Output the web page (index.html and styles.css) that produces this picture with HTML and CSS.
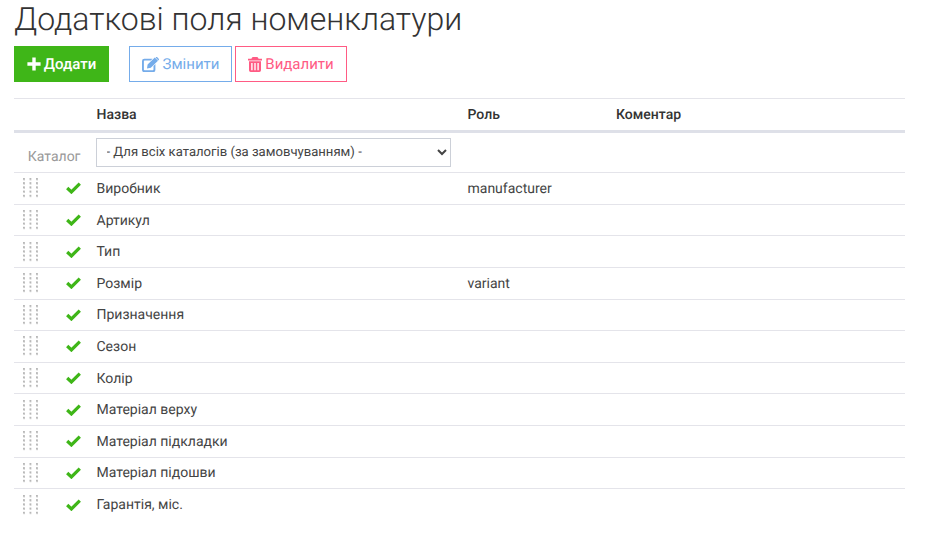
FILE: index.html
```html
<!DOCTYPE html>
<html lang="uk">
<head>
<meta charset="utf-8">
<title>Додаткові поля номенклатури</title>
<link rel="stylesheet" href="styles.css">
</head>
<body>
<h1 class="title">Додаткові поля номенклатури</h1>
<div class="toolbar">
  <button class="btn btn-add"><svg class="ico" viewBox="0 0 14 14"><path d="M5.3 0.4h3.4v4.9h4.9v3.4H8.7v4.9H5.3V8.7H0.4V5.3h4.9z" fill="currentColor"/></svg>Додати</button>
  <button class="btn btn-edit"><svg class="ico ico-edit" viewBox="0 0 17 15"><path d="M2.4 1.7h8.2L8.7 3.6H2.6a.7.7 0 0 0-.7.7v8.2c0 .4.3.7.7.7h8.2c.4 0 .7-.3.7-.7V8.9l1.9-1.9v5.8a2.4 2.4 0 0 1-2.4 2.4H2.4A2.4 2.4 0 0 1 0 12.8V4.1a2.4 2.4 0 0 1 2.4-2.4z" fill="currentColor"/><path d="M5.6 7.6l7.2-7.1 3.2 3.2-7.2 7.1-3.8.8zM13.9.3c.4-.4 1-.4 1.4 0l1.4 1.4c.4.4.4 1 0 1.4l-.3.3-2.8-2.8z" fill="currentColor"/></svg>Змінити</button>
  <button class="btn btn-del"><svg class="ico ico-del" viewBox="0 0 14 15"><path d="M5 0h4c.5 0 .9.3 1.1.7l.5 1.1H14v1.6H0V1.8h3.4L3.9.7C4.1.3 4.5 0 5 0zM1 4.3h12v9a1.7 1.7 0 0 1-1.7 1.7H2.7A1.7 1.7 0 0 1 1 13.3zm2.2 1.6v7.4h1.4V5.9zm3.1 0v7.4h1.4V5.9zm3.1 0v7.4h1.4V5.9z" fill="currentColor" fill-rule="evenodd"/></svg>Видалити</button>
</div>
<table class="grid">
  <colgroup><col class="c-drag"><col class="c-check"><col class="c-name"><col class="c-role"><col></colgroup>
  <thead>
    <tr><th></th><th></th><th>Назва</th><th>Роль</th><th>Коментар</th></tr>
  </thead>
  <tbody>
    <tr class="filter">
      <td colspan="2" class="filter-label">Каталог</td>
      <td class="filter-select"><select class="catalog"><option>- Для всіх каталогів (за замовчуванням) -</option></select></td>
      <td></td><td></td>
    </tr>
    <tr><td><span class="drag"></span></td><td class="ok"><svg class="check" viewBox="0 0 15 12"><path d="M1.2 6l4.2 4L13.8 1.6" fill="none" stroke="currentColor" stroke-width="3.2"/></svg></td><td>Виробник</td><td>manufacturer</td><td></td></tr>
    <tr><td><span class="drag"></span></td><td class="ok"><svg class="check" viewBox="0 0 15 12"><path d="M1.2 6l4.2 4L13.8 1.6" fill="none" stroke="currentColor" stroke-width="3.2"/></svg></td><td>Артикул</td><td></td><td></td></tr>
    <tr><td><span class="drag"></span></td><td class="ok"><svg class="check" viewBox="0 0 15 12"><path d="M1.2 6l4.2 4L13.8 1.6" fill="none" stroke="currentColor" stroke-width="3.2"/></svg></td><td>Тип</td><td></td><td></td></tr>
    <tr><td><span class="drag"></span></td><td class="ok"><svg class="check" viewBox="0 0 15 12"><path d="M1.2 6l4.2 4L13.8 1.6" fill="none" stroke="currentColor" stroke-width="3.2"/></svg></td><td>Розмір</td><td>variant</td><td></td></tr>
    <tr><td><span class="drag"></span></td><td class="ok"><svg class="check" viewBox="0 0 15 12"><path d="M1.2 6l4.2 4L13.8 1.6" fill="none" stroke="currentColor" stroke-width="3.2"/></svg></td><td>Призначення</td><td></td><td></td></tr>
    <tr><td><span class="drag"></span></td><td class="ok"><svg class="check" viewBox="0 0 15 12"><path d="M1.2 6l4.2 4L13.8 1.6" fill="none" stroke="currentColor" stroke-width="3.2"/></svg></td><td>Сезон</td><td></td><td></td></tr>
    <tr><td><span class="drag"></span></td><td class="ok"><svg class="check" viewBox="0 0 15 12"><path d="M1.2 6l4.2 4L13.8 1.6" fill="none" stroke="currentColor" stroke-width="3.2"/></svg></td><td>Колір</td><td></td><td></td></tr>
    <tr><td><span class="drag"></span></td><td class="ok"><svg class="check" viewBox="0 0 15 12"><path d="M1.2 6l4.2 4L13.8 1.6" fill="none" stroke="currentColor" stroke-width="3.2"/></svg></td><td>Матеріал верху</td><td></td><td></td></tr>
    <tr><td><span class="drag"></span></td><td class="ok"><svg class="check" viewBox="0 0 15 12"><path d="M1.2 6l4.2 4L13.8 1.6" fill="none" stroke="currentColor" stroke-width="3.2"/></svg></td><td>Матеріал підкладки</td><td></td><td></td></tr>
    <tr><td><span class="drag"></span></td><td class="ok"><svg class="check" viewBox="0 0 15 12"><path d="M1.2 6l4.2 4L13.8 1.6" fill="none" stroke="currentColor" stroke-width="3.2"/></svg></td><td>Матеріал підошви</td><td></td><td></td></tr>
    <tr class="last"><td><span class="drag"></span></td><td class="ok"><svg class="check" viewBox="0 0 15 12"><path d="M1.2 6l4.2 4L13.8 1.6" fill="none" stroke="currentColor" stroke-width="3.2"/></svg></td><td>Гарантія, міс.</td><td></td><td></td></tr>
  </tbody>
</table>
</body>
</html>
```
FILE: styles.css
```css
* { box-sizing: border-box; }
html, body { margin: 0; background: #fff; }
body {
  padding: 0 24px 0 14px;
  font-family: Roboto, "Liberation Sans", sans-serif;
  font-size: 14px;
  line-height: 20px;
  color: #444;
  text-rendering: geometricPrecision;
}
.title {
  margin: 0;
  height: 46px;
  font-size: 32px;
  line-height: 39px;
  font-weight: 300;
  color: #333;
}
.toolbar { display: flex; height: 52px; align-items: flex-start; }
.btn {
  display: flex;
  align-items: center;
  justify-content: center;
  height: 36px;
  padding: 0;
  background: #fff;
  border: 1px solid;
  font: 15px/20px Roboto, "Liberation Sans", sans-serif;
  text-rendering: geometricPrecision;
}
.ico { width: 14px; height: 14px; margin-right: 3px; }
.ico-edit { width: 17px; height: 15px; margin-right: 4px; }
.ico-del { width: 14px; height: 15px; margin-right: 3px; }
.btn-add { width: 95px; background: #3fb618; border-color: #3fb618; color: #fff; font-weight: 500; margin-right: 20px; }
.btn-edit { width: 103px; border-color: #75acea; color: #75acea; margin-right: 3px; }
.btn-del { width: 112px; border-color: #ff5b84; color: #ff5b84; }
.grid { width: 891px; table-layout: fixed; border-collapse: collapse; }
.c-drag { width: 42px; }
.c-check { width: 40.5px; }
.c-name { width: 371px; }
.c-role { width: 148.5px; }
.grid th {
  height: 33px;
  padding: 0;
  text-align: left;
  font-weight: 500;
  color: #333;
  border-top: 1px solid #e4e4ea;
  border-bottom: 3px solid #dee0e8;
}
.grid td {
  height: 31.6px;
  padding: 1px 0 0;
  border-bottom: 1px solid #e4e4ea;
  vertical-align: middle;
}
.grid .last td { border-bottom: 0; }
.grid .filter td { height: 41.2px; vertical-align: top; padding-top: 5px; }
.grid .filter .filter-label { color: #999; text-align: right; padding: 14px 16px 0 0; }
.catalog {
  display: block;
  width: 355px;
  height: 29px;
  margin-left: -1px;
  padding: 0 6px;
  background: #fff;
  border: 1px solid #ccd0d8;
  color: #444;
  font: 13.1px Roboto, "Liberation Sans", sans-serif;
  text-rendering: geometricPrecision;
}
.drag {
  display: block;
  width: 16px;
  height: 20px;
  margin: -1px 0 0 9px;
  background-image: radial-gradient(circle at 1px 1px, #b8b8b8 1.1px, transparent 1.3px);
  background-size: 6.5px 4.2px;
}
.check { display: block; width: 15px; height: 12px; margin: -1px 0 0 10px; color: #3fb618; }
```
